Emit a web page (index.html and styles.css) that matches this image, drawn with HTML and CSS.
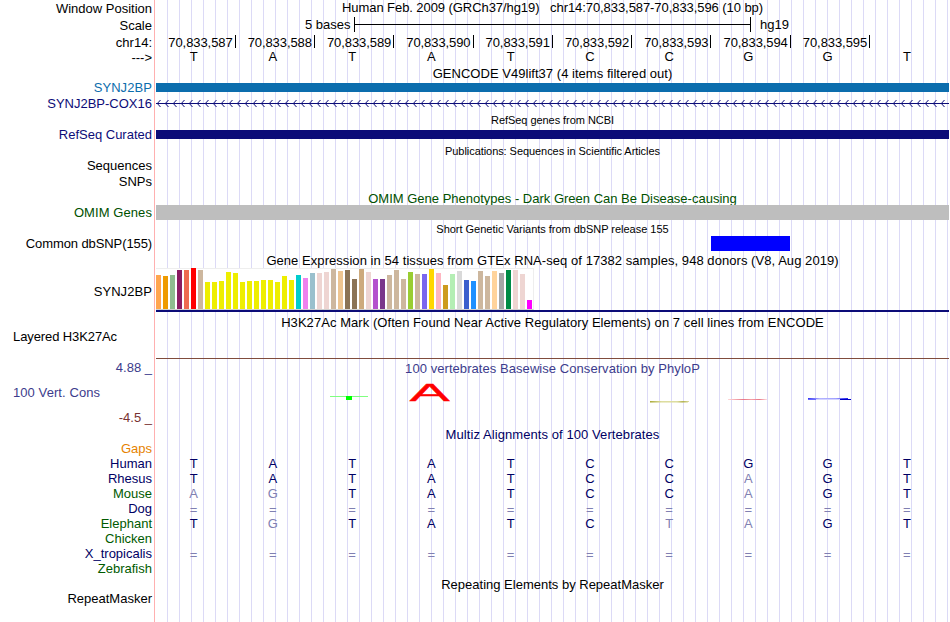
FILE: index.html
```html
<!DOCTYPE html>
<html lang="en">
<head>
<meta charset="utf-8">
<title>Genome Browser</title>
<link rel="stylesheet" href="styles.css">
</head>
<body>
<main class="browser">
  <div class="row h17"><div class="label drop">Window Position</div><div class="track title"><span class="t-pos">Human Feb. 2009 (GRCh37/hg19) &nbsp; chr14:70,833,587-70,833,596 (10 bp)</span></div></div>
  <div class="row h17"><div class="label drop">Scale</div><div class="track scale"><span class="scale-size">5 bases</span><span class="scale-bar"></span><span>hg19</span></div></div>
  <div class="row h15"><div class="label drop">chr14:</div><div class="track ruler" data-start="70833587"></div></div>
  <div class="row h17"><div class="label drop">---&gt;</div><div class="track bases" data-seq="TATATCCGGT"></div></div>
  <div class="title-row h14"><span class="t-gencode">GENCODE V49lift37 (4 items filtered out)</span></div>
  <div class="row h16 blue"><div class="label wide">SYNJ2BP</div><div class="track"><div class="gene gene-blue"></div></div></div>
  <div class="row h16 navy"><div class="label">SYNJ2BP-COX16</div><div class="track">
    <svg class="intron" width="793" height="16"><defs><pattern id="chevron" width="8" height="16" patternUnits="userSpaceOnUse"><path d="M4.5 4L1.3 7.5L4.5 11" fill="none" stroke="#0c0c78"/></pattern></defs><rect width="793" height="16" fill="url(#chevron)"/><rect y="7" width="793" height="1" fill="#0c0c78"/></svg></div></div>
  <div class="title-row small h15"><span class="t-refseq">RefSeq genes from NCBI</span></div>
  <div class="row h16 navy"><div class="label">RefSeq Curated</div><div class="track"><div class="gene gene-navy"></div></div></div>
  <div class="title-row small h15"><span class="t-pubs">Publications: Sequences in Scientific Articles</span></div>
  <div class="row h16"><div class="label">Sequences</div></div>
  <div class="row h17"><div class="label">SNPs</div></div>
  <div class="title-row h14 green"><span class="t-omim">OMIM Gene Phenotypes - Dark Green Can Be Disease-causing</span></div>
  <div class="row h16 green"><div class="label wide">OMIM Genes</div><div class="track"><div class="omim"></div></div></div>
  <div class="title-row small h15"><span class="t-snp">Short Genetic Variants from dbSNP release 155</span></div>
  <div class="row h17"><div class="label tight">Common dbSNP(155)</div><div class="track"><div class="variant"></div></div></div>
  <div class="title-row h15"><span class="t-gtex">Gene Expression in 54 tissues from GTEx RNA-seq of 17382 samples, 948 donors (V8, Aug 2019)</span></div>
  <div class="row gtex"><div class="label wide">SYNJ2BP</div><div class="track"><div class="expression"></div><div class="model"></div></div></div>
  <div class="title-row h14"><span class="t-h3k">H3K27Ac Mark (Often Found Near Active Regulatory Elements) on 7 cell lines from ENCODE</span></div>
  <div class="row layered"><div class="label left tight">Layered H3K27Ac</div><div class="track"></div></div>
  <div class="row cons">
    <div class="cons-labels"><div class="label">4.88 _</div><div class="label left wide">100 Vert. Cons</div><div class="label negative">-4.5 _</div></div>
    <div class="track"><div class="title"><span class="t-phylo">100 vertebrates Basewise Conservation by PhyloP</span></div>
      <svg class="logo" width="793" height="44" viewBox="156 376 793 44">
        <defs>
          <linearGradient id="olive"><stop stop-color="#aaaa38"/><stop offset=".3" stop-color="#dddda0"/><stop offset=".7" stop-color="#dddda0"/><stop offset=".85" stop-color="#b4b450"/><stop offset="1" stop-color="#dddda0"/></linearGradient>
          <linearGradient id="rose"><stop stop-color="#ffd8d8"/><stop offset=".4" stop-color="#e87888"/><stop offset=".6" stop-color="#f4a0a8"/><stop offset=".8" stop-color="#e87888"/><stop offset="1" stop-color="#ffe0e0"/></linearGradient>
          <linearGradient id="azure"><stop stop-color="#3434f0"/><stop offset=".3" stop-color="#b4b4ff"/><stop offset=".7" stop-color="#a0a0ff"/><stop offset="1" stop-color="#2020e8"/></linearGradient>
        </defs>
        <rect x="330" y="396" width="38" height="1" fill="#80ff80"/><rect x="346" y="396" width="6" height="4" fill="#00ff00"/>
        <text class="base-a" transform="translate(409.6 401) scale(6.05 2.32)">A</text>
        <rect x="650" y="401" width="39" height="1" fill="url(#olive)"/><rect x="650" y="402" width="38" height="1" fill="url(#olive)" opacity=".55"/>
        <rect x="728" y="399" width="39" height="1" fill="url(#rose)"/>
        <rect x="808" y="398" width="40" height="1" fill="url(#azure)"/><rect x="808" y="399" width="8" height="1" fill="#6868ff"/><rect x="816" y="399" width="24" height="1" fill="#d4d4ff"/><rect x="840" y="399" width="11" height="1" fill="#0000c8"/>
      </svg></div>
  </div>
  <div class="title-row h14 navy-text"><span class="t-multiz">Multiz Alignments of 100 Vertebrates</span></div>
  <div class="row h15 orange"><div class="label">Gaps</div></div>
  <div class="row h15 navy-text"><div class="label">Human</div><div class="track bases" data-seq="TATATCCGGT"></div></div>
  <div class="row h15 navy-text"><div class="label">Rhesus</div><div class="track bases" data-seq="TATATCCaGT"></div></div>
  <div class="row h15 leaf"><div class="label">Mouse</div><div class="track bases" data-seq="agTATCCaGT"></div></div>
  <div class="row h15 navy-text"><div class="label">Dog</div><div class="track bases drop" data-seq="=========="></div></div>
  <div class="row h15 leaf"><div class="label">Elephant</div><div class="track bases" data-seq="TgTATCtaGT"></div></div>
  <div class="row h15 leaf"><div class="label">Chicken</div></div>
  <div class="row h15 navy-text"><div class="label">X_tropicalis</div><div class="track bases drop" data-seq="=========="></div></div>
  <div class="row h15 leaf"><div class="label">Zebrafish</div></div>
  <div class="title-row h15 drop"><span class="t-repeat">Repeating Elements by RepeatMasker</span></div>
  <div class="row h15"><div class="label">RepeatMasker</div></div>
</main>
<script src="tracks.js"></script>
</body>
</html>
```
FILE: styles.css
```css
* { box-sizing: border-box; }
body { margin: 0; background: #fff; }
.browser {
  width: 949px;
  height: 622px;
  overflow: hidden;
  font: 13px/15px "Liberation Sans", Arial, sans-serif;
  color: #000;
  background:
    linear-gradient(#ffb0b0, #ffb0b0) 154px 0 / 1px 100% no-repeat,
    repeating-linear-gradient(90deg, transparent 0 11px, #dcdaf6 11px 12px) 156px 0 / 793px 100% no-repeat;
}
.row { display: grid; grid-template-columns: 152px 793px; column-gap: 4px; }
.label { text-align: right; white-space: pre; }
.label.left { text-align: left; padding-left: 13px; }
.tight { letter-spacing: -0.1px; }
.wide { letter-spacing: 0.08px; }
.drop { padding-top: 1px; }
.title-row { padding-left: 156px; text-align: center; white-space: nowrap; }
.title { text-align: center; white-space: nowrap; }
.small { font-size: 11px; line-height: 16px; }
.h14 { height: 14px; }
.h15 { height: 15px; }
.h16 { height: 16px; }
.h17 { height: 17px; }

.t-pos { letter-spacing: -0.07px; }
.t-gencode { letter-spacing: 0.03px; }
.t-refseq { letter-spacing: -0.05px; }
.t-pubs { letter-spacing: -0.06px; }
.t-snp { letter-spacing: -0.02px; }
.t-gtex { letter-spacing: 0.055px; }
.t-h3k { letter-spacing: 0.06px; }
.t-phylo { letter-spacing: 0.06px; }
.t-multiz { letter-spacing: 0.08px; }

.blue { color: #0c6dad; }
.navy { color: #0c0c78; }
.green { color: #005000; }
.navy-text { color: #000064; }
.leaf { color: #005a00; }
.orange { color: #e68200; }

.scale { display: flex; padding-left: 149px; }
.scale-size { width: 49px; }
.scale-bar {
  width: 397px;
  height: 15px;
  margin-right: 9px;
  border: solid #000;
  border-width: 0 1px;
  background: linear-gradient(#000, #000) 0 7px / 100% 1px no-repeat;
}
.ruler { display: grid; grid-template-columns: repeat(9, 79.32px); margin-left: 0.28px; padding-top: 1px; }
.tick { height: 13px; line-height: 15px; padding-right: 2px; border-right: 1px solid #000; text-align: right; letter-spacing: -0.08px; }
.bases { display: grid; grid-template-columns: repeat(10, 79.25px); margin-left: -2px; text-align: center; color: #000; }
.navy-text .bases, .leaf .bases { color: #000064; }
.bases .mismatch { color: #8080b2; }

.gene { height: 9px; margin-top: 3px; }
.gene-blue { background: #0c6dad; }
.gene-navy { background: #0c0c78; }
.intron { display: block; }
.omim { height: 15px; background: #bebebe; }
.variant { width: 79px; height: 15px; margin-left: 555px; background: #00f; }

.gtex { height: 47px; }
.gtex .label { padding-top: 16px; }
.expression {
  display: flex;
  align-items: flex-end;
  gap: 2px;
  width: 378px;
  height: 42px;
  background: #fff;
  border: solid #eee;
  border-width: 1px 1px 0 0;
  border-bottom: 1px solid #cfcfcf;
}
.tissue { width: 5px; flex: none; }
.model { height: 2px; background: #0c0c78; }

.layered { height: 30px; }
.layered .track { border-bottom: 1px solid #804c3c; }
.cons { height: 68px; color: #3c3c8c; }
.cons-labels { display: flex; flex-direction: column; gap: 10px; padding-top: 1px; }
.cons .title { padding-top: 2px; }
.negative { color: #783232; }
.logo { display: block; }
.base-a { font: 10px "Liberation Sans", Arial, sans-serif; fill: #f00; stroke: #f00; stroke-width: 0.12px; }
```
FILE: tracks.js
```js
// Coordinate ruler
document.querySelectorAll('.ruler').forEach(ruler => {
  const start = Number(ruler.dataset.start);
  for (let i = 0; i < 9; i++) {
    const tick = document.createElement('span');
    tick.className = 'tick';
    tick.textContent = (start + i).toLocaleString('en-US');
    ruler.append(tick);
  }
});

// Bases; lower case marks a difference from the reference genome
document.querySelectorAll('.bases').forEach(row => {
  for (const base of row.dataset.seq) {
    const cell = document.createElement('span');
    if (base === '=' || base !== base.toUpperCase()) cell.className = 'mismatch';
    cell.textContent = base.toUpperCase();
    row.append(cell);
  }
});

// GTEx expression: [height, colour] for each tissue
const yellow = '#eeee00', tan = '#cdb79e', pale = '#eed5d2';
const tissues = [
  [34, '#ffa54f'], [33, '#ee9a00'], [34, '#8fbc8f'], [39, '#8b1c62'], [39, '#ee6a50'], [41, '#ff0000'], [39, tan],
  [27, yellow], [27, yellow], [28, yellow], [37, yellow], [36, yellow], [27, yellow], [28, yellow], [28, yellow],
  [29, yellow], [29, yellow], [27, yellow], [33, yellow], [29, yellow],
  [34, '#00cdcd'], [31, '#ee82ee'], [36, '#9ac0cd'], [36, pale], [37, pale], [40, tan], [38, '#eec591'],
  [39, '#8b7355'], [30, '#8b7355'], [40, '#cdaa7d'], [37, pale], [30, '#b452cd'], [30, '#7a378b'],
  [34, tan], [39, tan], [30, tan], [37, '#9acd32'], [35, tan], [35, '#7a67ee'], [40, '#ffd700'], [36, '#ffb6c1'],
  [24, '#cd9b1d'], [35, '#b4eeb4'], [38, '#d9d9d9'], [29, '#3a5fcd'], [28, '#1e90ff'], [38, tan], [33, tan],
  [38, '#ffd39b'], [36, '#a6a6a6'], [39, '#008b45'], [39, pale], [35, pale], [9, '#ff00ff']
];
const chart = document.querySelector('.expression');
tissues.forEach(([height, colour]) => {
  const bar = document.createElement('span');
  bar.className = 'tissue';
  bar.style.height = height + 'px';
  bar.style.background = colour;
  chart.append(bar);
});
```
